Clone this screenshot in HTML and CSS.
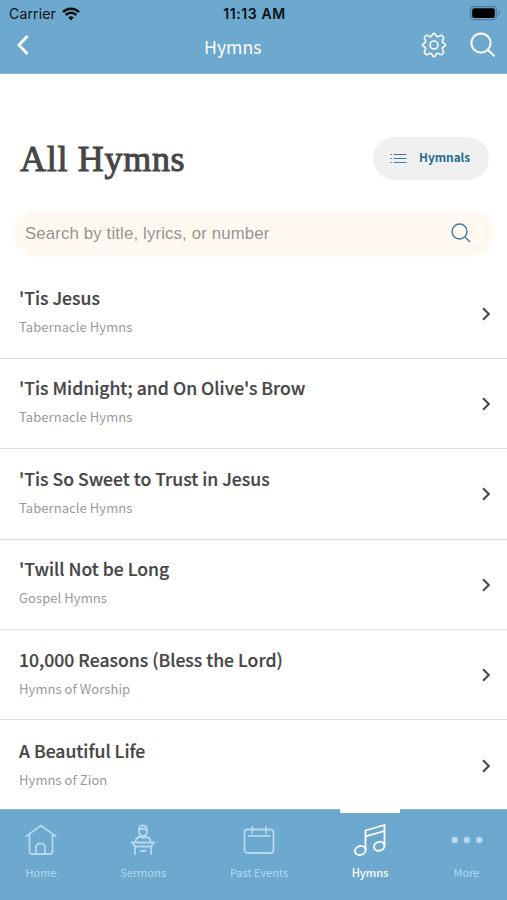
FILE: index.html
```html
<!DOCTYPE html>
<html lang="en">
<head>
<meta charset="utf-8">
<title>All Hymns</title>
<link rel="stylesheet" href="styles.css">
</head>
<body>
<div class="app">
<header class="top">
  <div class="status">
    <div class="carrier"><span>Carrier</span>
      <svg width="18" height="14" viewBox="0 0 18 14"><path d="M9 13.4 6.2 10.5a4 4 0 0 1 5.6 0Z"/><path d="M3.7 8a7.6 7.6 0 0 1 10.6 0M1 5.1a11.5 11.5 0 0 1 16 0" fill="none" stroke="#0b1013" stroke-width="2.5"/></svg>
    </div>
    <span class="time">11:13 AM</span>
    <svg class="battery" width="30" height="15" viewBox="0 0 30 15"><rect x=".6" y=".6" width="25.8" height="13" rx="3.5" fill="none" stroke="#4f7c99" stroke-width="1.2"/><rect x="2.2" y="2.2" width="22.6" height="9.8" rx="2" fill="#000"/><path d="M28 4.8c2.2 1 2.2 3.7 0 4.7Z" fill="#4f7c99"/></svg>
  </div>
  <nav class="bar">
    <svg class="back" width="14" height="22" viewBox="0 0 14 22"><path d="M12.5 2 4 11l8.5 9"/></svg>
    <h2 class="screen">Hymns</h2>
    <div class="actions">
      <svg class="gear" width="26" height="26" viewBox="0 0 26 26"><circle cx="13" cy="13" r="4"/><path d="M11.2 3.2Q13 -.4 14.8 3.2Q15.8 5.2 17.7 4.4Q21.5 2.2 21.5 4.5Q23.8 4.5 21.6 8.3Q20.8 10.2 22.8 11.2Q26.4 13 22.8 14.8Q20.8 15.8 21.6 17.7Q23.8 21.5 21.5 21.5Q21.5 23.8 17.7 21.6Q15.8 20.8 14.8 22.8Q13 26.4 11.2 22.8Q10.2 20.8 8.3 21.6Q4.5 23.8 4.5 21.5Q2.2 21.5 4.4 17.7Q5.2 15.8 3.2 14.8Q-.4 13 3.2 11.2Q5.2 10.2 4.4 8.3Q2.2 4.5 4.5 4.5Q4.5 2.2 8.3 4.4Q10.2 5.2 11.2 3.2Z"/></svg>
      <svg class="find" width="26" height="26" viewBox="0 0 26 26"><circle cx="11" cy="11" r="9.6"/><path d="m18 18 6.5 6.3"/></svg>
    </div>
  </nav>
</header>
<main class="content">
  <div class="heading">
    <h1>All Hymns</h1>
    <div class="pill">
      <svg width="17" height="11" viewBox="0 0 17 11"><path d="M3.7 1.5H16.5M3.7 5.5H16.5M3.7 9.5H16.5M.5 1.5H2M.5 5.5H2M.5 9.5H2"/></svg>
      <span>Hymnals</span>
    </div>
  </div>
  <div class="search">
    <span>Search by title, lyrics, or number</span>
    <svg width="20" height="20" viewBox="0 0 20 20"><circle cx="8.5" cy="8.5" r="7.5"/><path d="m14 14 5 5"/></svg>
  </div>
  <ul class="list">
    <li><div><h3>'Tis Jesus</h3><p>Tabernacle Hymns</p></div><svg class="chev" width="10" height="14" viewBox="0 0 10 14"><path d="m2 1.2 5.8 5.8L2 12.8"/></svg></li>
    <li><div><h3>'Tis Midnight; and On Olive's Brow</h3><p>Tabernacle Hymns</p></div><svg class="chev" width="10" height="14" viewBox="0 0 10 14"><path d="m2 1.2 5.8 5.8L2 12.8"/></svg></li>
    <li><div><h3>'Tis So Sweet to Trust in Jesus</h3><p>Tabernacle Hymns</p></div><svg class="chev" width="10" height="14" viewBox="0 0 10 14"><path d="m2 1.2 5.8 5.8L2 12.8"/></svg></li>
    <li><div><h3>'Twill Not be Long</h3><p>Gospel Hymns</p></div><svg class="chev" width="10" height="14" viewBox="0 0 10 14"><path d="m2 1.2 5.8 5.8L2 12.8"/></svg></li>
    <li><div><h3>10,000 Reasons (Bless the Lord)</h3><p>Hymns of Worship</p></div><svg class="chev" width="10" height="14" viewBox="0 0 10 14"><path d="m2 1.2 5.8 5.8L2 12.8"/></svg></li>
    <li><div><h3>A Beautiful Life</h3><p>Hymns of Zion</p></div><svg class="chev" width="10" height="14" viewBox="0 0 10 14"><path d="m2 1.2 5.8 5.8L2 12.8"/></svg></li>
  </ul>
</main>
<footer class="tabs">
  <div class="tab"><svg width="32" height="32" viewBox="0 0 32 32"><path d="M1.3 12.2 16 1.4l14.7 10.8M4.5 10v17.5a2.5 2.5 0 0 0 2.5 2.5h18a2.5 2.5 0 0 0 2.5-2.5V10M11 30v-7a3.5 3.5 0 0 1 3.5-3.5h2A3.5 3.5 0 0 1 20 23v7"/></svg><span>Home</span></div>
  <div class="tab"><svg width="32" height="32" viewBox="0 0 32 32"><path d="M12 5.5a4 4 0 0 1 8 0v2.3a4 4 0 0 1-8 0ZM12 6q4-2.5 8 0M8.5 18q0-4.3 5-5.5l2.5 1.7 2.5-1.7q5 1.2 5 5.5M4.5 18.5h23M6 18.5l1.5 4h17l1.5-4M8 22.5V30M24 22.5V30M13.5 27h5"/></svg><span>Sermons</span></div>
  <div class="tab"><svg width="32" height="32" viewBox="0 0 32 32"><rect x="1.5" y="5.5" width="29" height="23.5" rx="3"/><path d="M5.5 11.8h21M9.3 3v6M23 3v6"/></svg><span>Past Events</span></div>
  <div class="tab active"><svg width="32" height="32" viewBox="0 0 32 32"><path d="M11.5 26V6.5L30.5 1v21M11.5 12.3 30.5 7"/><ellipse cx="6.3" cy="26.5" rx="5.4" ry="4.4" transform="rotate(-20 6.3 26.5)"/><ellipse cx="25.2" cy="22.3" rx="5.4" ry="4.4" transform="rotate(-20 25.2 22.3)"/></svg><span>Hymns</span></div>
  <div class="tab"><svg class="dots" width="32" height="32" viewBox="0 0 32 32"><circle cx="3.7" cy="16" r="3.2"/><circle cx="16" cy="16" r="3.2"/><circle cx="28.3" cy="16" r="3.2"/></svg><span>More</span></div>
</footer>
</div>
</body>
</html>
```
FILE: styles.css
```css
* { box-sizing: border-box; margin: 0; padding: 0; }
body { font-family: "Noto Sans CJK JP", "Noto Sans", sans-serif; background: #fff; color: #464646; }
svg { display: block; flex: none; }
.app { width: 507px; height: 900px; display: flex; flex-direction: column; overflow: hidden; }
.top { height: 74px; flex: none; background: #6da8ce; border-bottom: 1px solid #83b5d8; }
.status { height: 27px; display: grid; grid-template-columns: 1fr auto 1fr; align-items: center; padding: 0 7px 0 9px; font-family: Inter, sans-serif; font-size: 14px; line-height: 20px; color: #0b1013; }
.carrier { display: flex; align-items: center; gap: 6px; letter-spacing: 0.15px; }
.carrier svg { fill: #0b1013; }
.time { font-weight: 600; letter-spacing: 0.6px; }
.battery { justify-self: end; }
.bar { height: 36px; display: grid; grid-template-columns: 189px 1fr auto; align-items: center; padding: 0 11px 0 15px; }
.bar svg { fill: none; stroke: #fff; }
.back path { stroke-width: 2.8; }
.screen { font-size: 17.7px; line-height: 26px; font-weight: 400; color: #fff; padding-top: 1px; }
.actions { display: flex; justify-content: flex-end; gap: 23px; }
.gear { stroke-width: 1.6; }
.find { stroke-width: 2; }
.content { height: 735px; flex: none; background: #fff; padding-top: 62px; }
.heading { height: 44px; display: flex; justify-content: space-between; align-items: center; padding: 0 18px 0 20px; }
h1 { font-family: "Liberation Serif", serif; font-size: 36px; line-height: 44px; font-weight: 400; -webkit-text-stroke: 1px #464646; letter-spacing: 0.7px; padding-top: 2px; }
.pill { width: 116px; height: 43px; border-radius: 22px; background: #f0f0f0; display: flex; align-items: center; gap: 12px; padding-left: 17px; color: #256d91; font-size: 11.8px; font-weight: 700; }
.pill span { padding-bottom: 3px; }
.pill svg, .search svg { fill: none; stroke: #417d99; stroke-width: 1.2; }
.search { height: 46px; margin: 30px 13px 0; padding: 0 23px 0 12px; border-radius: 23px; background: #fff9f2; box-shadow: 0 0 3px #fff9f2; display: flex; align-items: center; justify-content: space-between; font-family: "Liberation Sans", sans-serif; font-size: 16.8px; letter-spacing: 0.14px; color: #96948f; }
.search span { padding-top: 2px; }
.search svg { stroke-width: 1.4; }
.list { list-style: none; margin-top: 12.4px; }
.list li { height: 90.4px; display: flex; justify-content: space-between; align-items: center; padding: 0 16px 0 19px; border-bottom: 1px solid #dfdfdf; }
.list li:last-child { border-bottom: 0; }
.list li div { padding-bottom: 5px; }
h3 { font-size: 17.6px; line-height: 28px; font-weight: 500; -webkit-text-stroke: 0.2px #464646; }
.list p { font-size: 13px; line-height: 20px; margin-top: 5px; letter-spacing: 0.07px; color: #999; }
.chev { fill: none; stroke: #4a4a4a; stroke-width: 2.1; margin-top: 1px; }
.tabs { height: 91px; flex: none; background: #6da8ce; border-top: 1px solid #83b5e2; display: grid; grid-template-columns: 82px 122px 110px 112px 81px; }
.tab { display: flex; flex-direction: column; align-items: center; padding-top: 14px; color: #b4d9ef; font-size: 11px; line-height: 16px; }
.tab svg { fill: none; stroke: #b4d9ef; stroke-width: 1.8; stroke-linejoin: round; stroke-linecap: round; }
.tab .dots { fill: #b4d9ef; stroke: none; }
.tab span { margin-top: 8px; }
.active { color: #fff; font-weight: 500; padding-top: 0; }
.active::before { content: ""; width: 60px; height: 4px; margin: -1px 0 11px; background: #fff; flex: none; }
.active svg { stroke: #fff; }
```
